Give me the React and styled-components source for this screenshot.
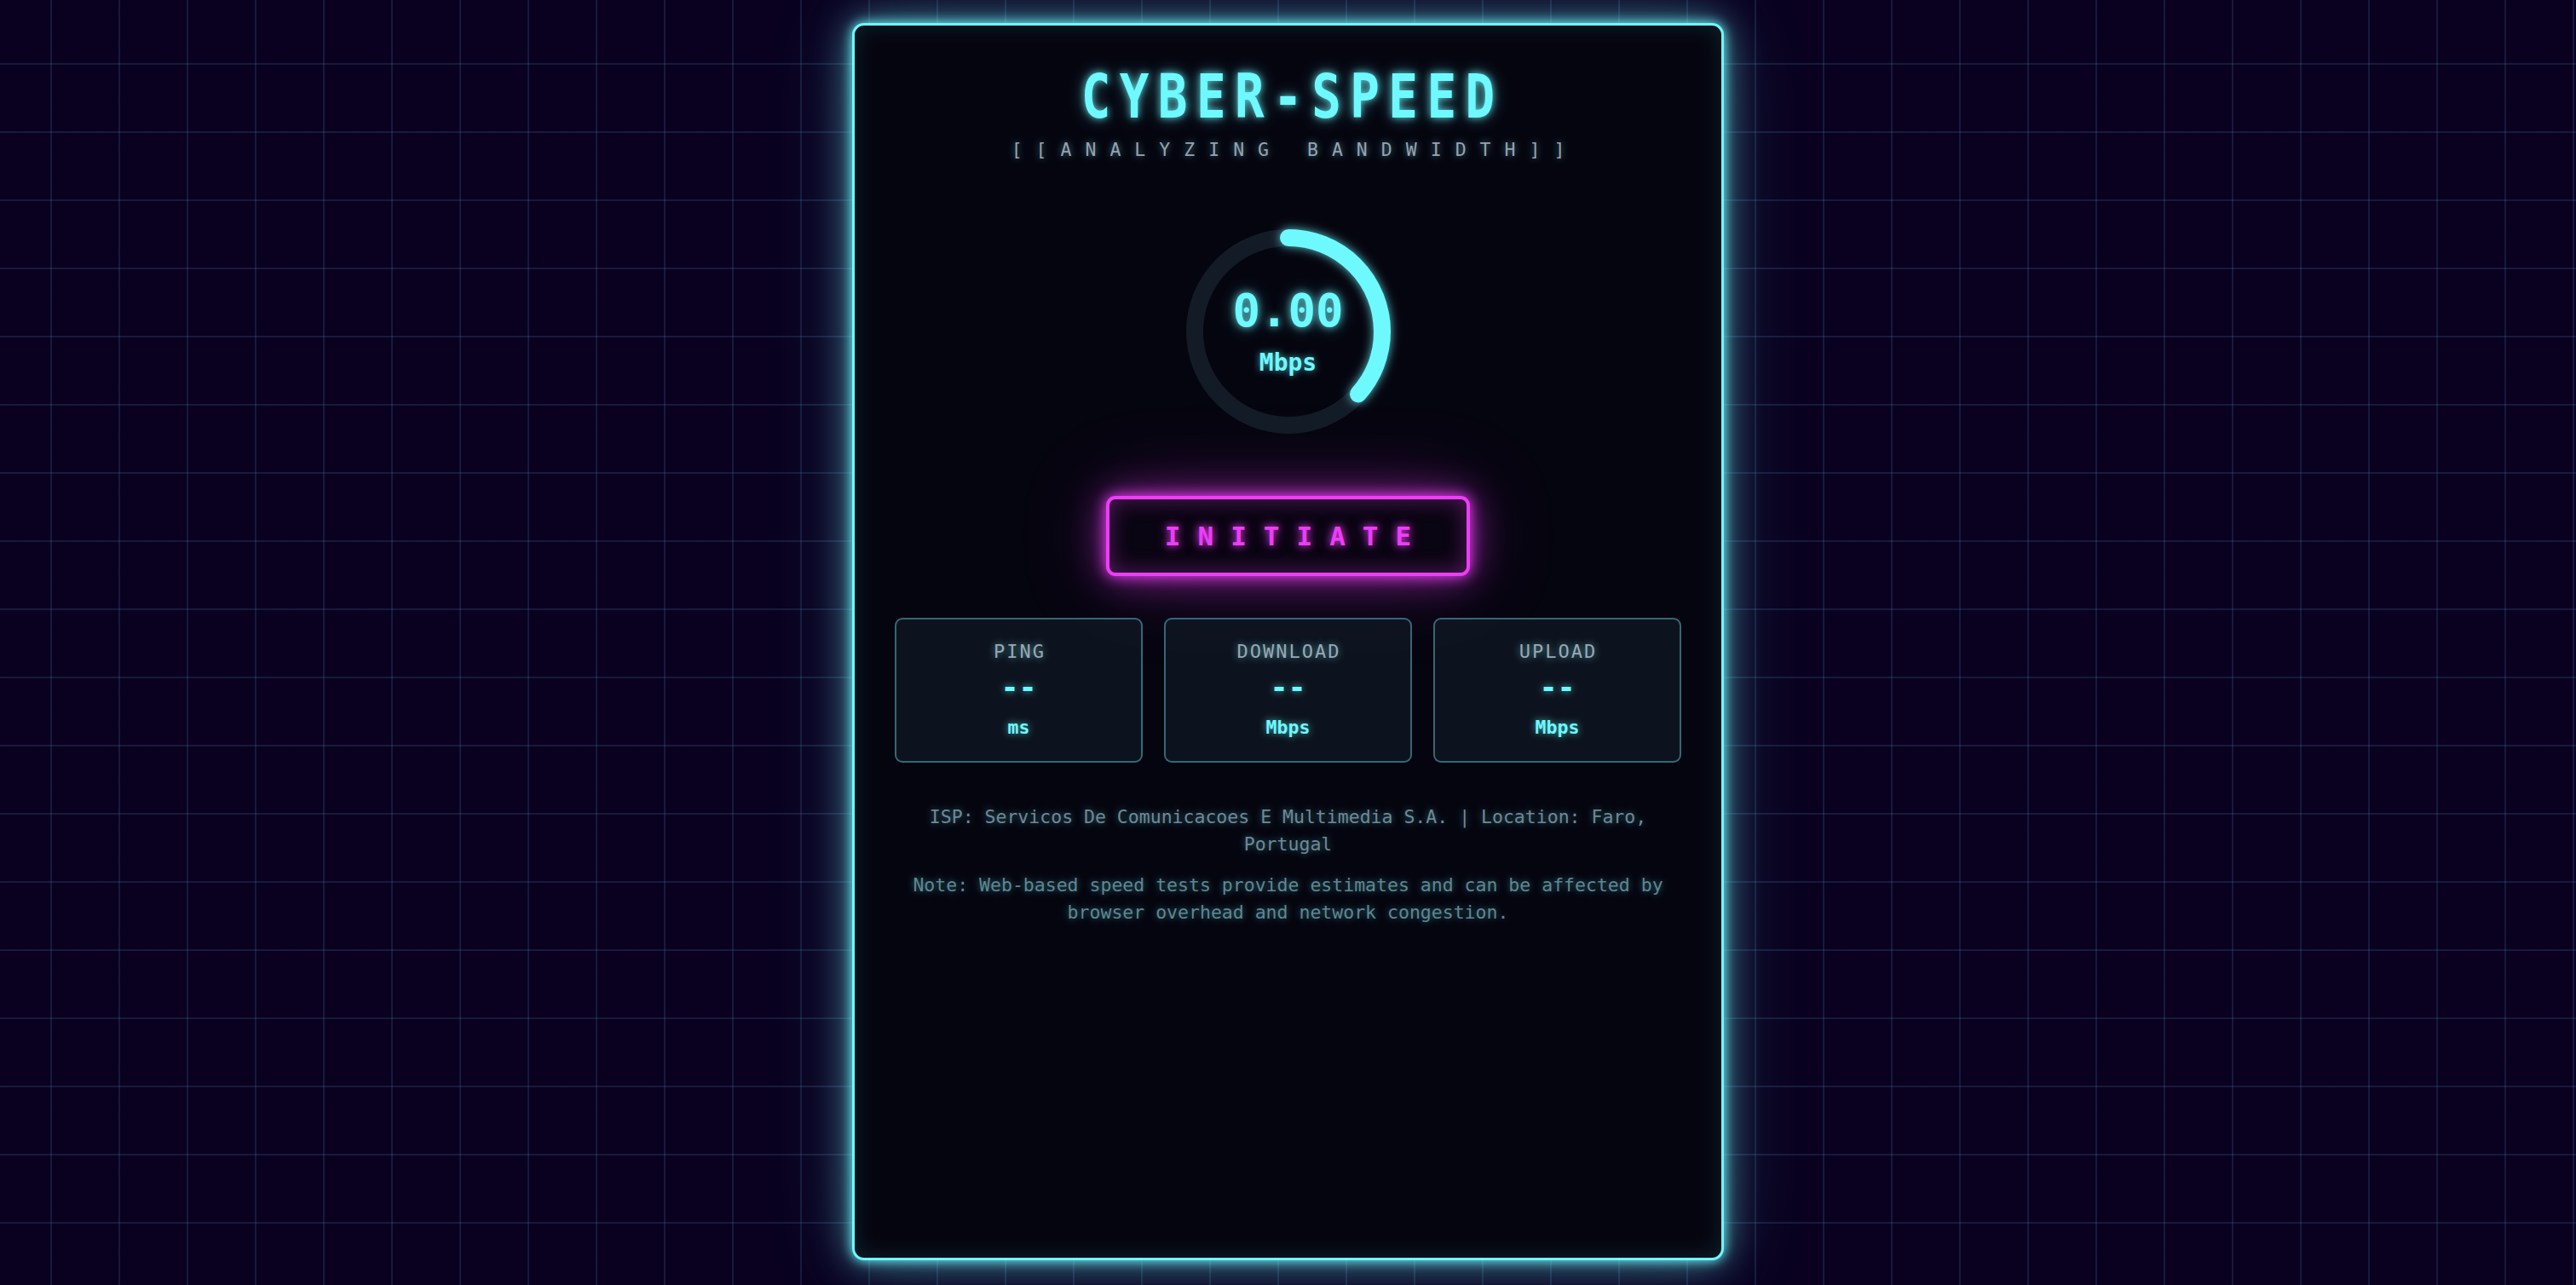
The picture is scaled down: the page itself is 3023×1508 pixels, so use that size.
import styled, { createGlobalStyle } from 'styled-components';

const cyan = '#6ef9ff';
const magenta = '#ec3df7';
const mono = '"DejaVu Sans Mono", "Liberation Mono", monospace';

const GlobalStyle = createGlobalStyle`
  html, body {
    margin: 0;
    padding: 0;
  }

  body {
    background-color: #0a0020;
    background-image:
      linear-gradient(to right, rgba(60, 110, 150, 0.24) 2px, transparent 2px),
      linear-gradient(to bottom, rgba(60, 110, 150, 0.24) 2px, transparent 2px);
    background-size: 80px 80px;
    background-position: 59px 74px;
    font-family: ${mono};
    overflow: hidden;
  }
`;

const Page = styled.div`
  min-height: 100vh;
  box-sizing: border-box;
  padding: 27px 0 29px;
  display: flex;
  justify-content: center;
  align-items: flex-start;
`;

const Card = styled.div`
  width: 1023px;
  height: 1452px;
  box-sizing: border-box;
  border: 3px solid ${cyan};
  border-radius: 14px;
  background: #05050f;
  padding: 47px 47px;
  display: flex;
  flex-direction: column;
  align-items: center;
  box-shadow:
    0 0 14px ${cyan},
    0 0 44px rgba(110, 249, 255, 0.55),
    0 0 100px rgba(110, 249, 255, 0.2),
    inset 0 0 28px rgba(110, 249, 255, 0.12);
`;

// the display face is narrow with wide tracking, so the mono glyphs are condensed a little
const Title = styled.h1`
  margin: 0;
  padding-left: 13px;
  font-family: ${mono};
  font-size: 72px;
  line-height: 72px;
  font-weight: bold;
  letter-spacing: 13px;
  color: ${cyan};
  transform: scaleX(0.8);
  text-shadow: 0 0 10px rgba(110, 249, 255, 0.8), 0 0 22px rgba(110, 249, 255, 0.45);
`;

const Subtitle = styled.div`
  margin-top: 16px;
  padding-left: 16px;
  font-size: 21.5px;
  line-height: 21.5px;
  letter-spacing: 16px;
  color: #9aa1b0;
  text-shadow: 0 0 8px rgba(110, 249, 255, 0.55);
  white-space: nowrap;
`;

const Gauge = styled.div`
  position: relative;
  margin-top: 82px;
  width: 240px;
  height: 240px;
  display: flex;
  flex-direction: column;
  align-items: center;
  justify-content: center;
  gap: 20px;
`;

const GaugeSvg = styled.svg`
  position: absolute;
  inset: 0;
  overflow: visible;
`;

const Arc = styled.circle`
  filter: drop-shadow(0 0 6px rgba(110, 249, 255, 0.8));
`;

const Speed = styled.div`
  position: relative;
  font-size: 54px;
  line-height: 54px;
  font-weight: bold;
  color: ${cyan};
  text-shadow: 0 0 10px rgba(110, 249, 255, 0.8), 0 0 20px rgba(110, 249, 255, 0.4);
`;

const SpeedUnit = styled.div`
  position: relative;
  font-size: 28px;
  line-height: 28px;
  font-weight: bold;
  color: ${cyan};
  text-shadow: 0 0 8px rgba(110, 249, 255, 0.7);
`;

const StartButton = styled.button`
  margin-top: 73px;
  width: 427px;
  height: 94px;
  box-sizing: border-box;
  border: 4px solid ${magenta};
  border-radius: 11px;
  background: #0a0512;
  padding: 0 0 0 20px;
  font-family: ${mono};
  font-size: 31px;
  font-weight: bold;
  letter-spacing: 20px;
  color: ${magenta};
  text-shadow: 0 0 8px rgba(236, 61, 247, 0.9), 0 0 16px rgba(236, 61, 247, 0.5);
  box-shadow:
    0 0 16px ${magenta},
    0 0 44px rgba(236, 61, 247, 0.55),
    0 0 100px rgba(236, 61, 247, 0.25),
    inset 0 0 26px rgba(236, 61, 247, 0.35);
  cursor: pointer;
`;

const Stats = styled.div`
  margin-top: 49px;
  width: 100%;
  display: grid;
  grid-template-columns: repeat(3, 1fr);
  gap: 25px;
`;

const StatBox = styled.div`
  height: 170px;
  box-sizing: border-box;
  border: 2px solid rgba(70, 140, 155, 0.7);
  border-radius: 9px;
  background: rgba(16, 24, 36, 0.75);
  padding-top: 27px;
  display: flex;
  flex-direction: column;
  align-items: center;
`;

const StatLabel = styled.div`
  padding-left: 2px;
  font-size: 22px;
  line-height: 22px;
  letter-spacing: 2px;
  color: #9ea6b3;
  text-shadow: 0 0 8px rgba(110, 249, 255, 0.6);
`;

const StatValue = styled.div`
  margin-top: 14px;
  font-size: 35px;
  line-height: 35px;
  font-weight: bold;
  color: ${cyan};
  text-shadow: 0 0 8px rgba(110, 249, 255, 0.7);
`;

const StatUnit = styled.div`
  margin-top: 18px;
  font-size: 21.5px;
  line-height: 21.5px;
  font-weight: bold;
  color: ${cyan};
  text-shadow: 0 0 8px rgba(110, 249, 255, 0.7);
`;

const Info = styled.p`
  margin: ${(p) => p.$top}px 0 0;
  width: 100%;
  text-align: center;
  font-size: 21.5px;
  line-height: 1.5;
  color: ${(p) => p.$color};
  text-shadow: 0 0 8px rgba(110, 249, 255, 0.45);
`;

const stats = [
  { label: 'PING', unit: 'ms' },
  { label: 'DOWNLOAD', unit: 'Mbps' },
  { label: 'UPLOAD', unit: 'Mbps' },
];

const radius = 110;
const circumference = 2 * Math.PI * radius;
const progress = 0.366;

const App = () => {
  return (
    <>
      <GlobalStyle />
      <Page>
        <Card>
          <Title>CYBER-SPEED</Title>
          <Subtitle>[[ANALYZING BANDWIDTH]]</Subtitle>

          <Gauge>
            <GaugeSvg width="240" height="240" viewBox="0 0 240 240">
              <circle cx="120" cy="120" r={radius} fill="none" stroke="#131b27" strokeWidth="20" />
              <Arc
                cx="120"
                cy="120"
                r={radius}
                fill="none"
                stroke={cyan}
                strokeWidth="20"
                strokeLinecap="round"
                strokeDasharray={`${circumference * progress} ${circumference}`}
                transform="rotate(-90 120 120)"
              />
            </GaugeSvg>
            <Speed>0.00</Speed>
            <SpeedUnit>Mbps</SpeedUnit>
          </Gauge>

          <StartButton>INITIATE</StartButton>

          <Stats>
            {stats.map((s) => (
              <StatBox key={s.label}>
                <StatLabel>{s.label}</StatLabel>
                <StatValue>--</StatValue>
                <StatUnit>{s.unit}</StatUnit>
              </StatBox>
            ))}
          </Stats>

          <Info $top={48} $color="#6f8997">
            ISP: Servicos De Comunicacoes E Multimedia S.A. | Location: Faro, Portugal
          </Info>
          <Info $top={16} $color="#5e8793">
            Note: Web-based speed tests provide estimates and can be affected by browser overhead and network congestion.
          </Info>
        </Card>
      </Page>
    </>
  );
};

export default App;
